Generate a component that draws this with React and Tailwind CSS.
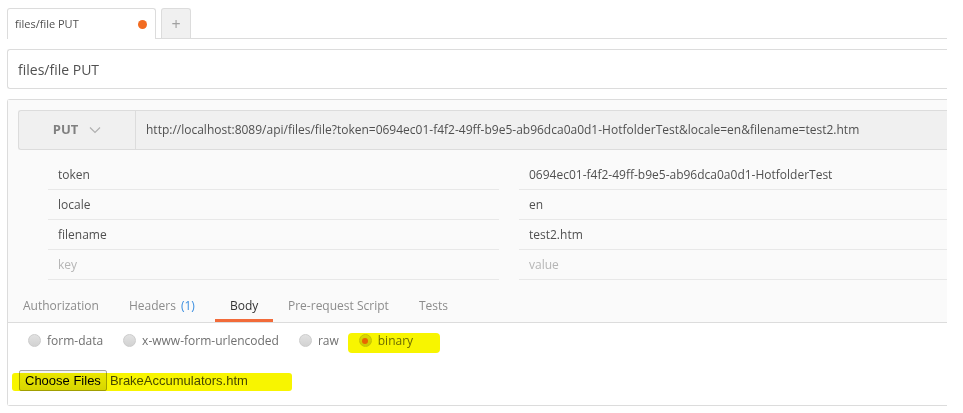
import React from 'react';

const params = [
  { key: 'token', value: '0694ec01-f4f2-49ff-b9e5-ab96dca0a0d1-HotfolderTest' },
  { key: 'locale', value: 'en' },
  { key: 'filename', value: 'test2.htm' },
  { key: 'key', value: 'value', placeholder: true },
];

const tabs = [
  { label: 'Authorization', w: 'w-[106px]' },
  { label: 'Headers', count: '(1)', w: 'w-[101px]' },
  { label: 'Body', w: 'w-[58px]', active: true },
  { label: 'Pre-request Script', w: 'w-[131px]' },
  { label: 'Tests', w: 'w-[70px]' },
];

const bodyTypes = ['form-data', 'x-www-form-urlencoded', 'raw', 'binary'];

const Radio = ({ checked }) => (
  <span className="w-[13px] h-[13px] rounded-full border border-[#cccccc] bg-gradient-to-b from-[#e2e2e2] to-[#d2d2d2] flex items-center justify-center shrink-0">
    {checked && <span className="w-[6px] h-[6px] rounded-full bg-[#f06a1f]" />}
  </span>
);

const App = () => {
  return (
    <div
      className="w-[963px] h-[413px] bg-white overflow-hidden relative"
      style={{ fontFamily: '"Open Sans", "Liberation Sans", sans-serif' }}
    >
      <div className="ml-[7px] w-[940px]">
        {/* Tabs bar */}
        <div className="pt-[8px] flex items-end border-b border-[#dcdcdc]">
          <div className="-mb-px w-[149px] h-[31px] bg-white border border-b-0 border-[#dcdcdc] rounded-t-[3px] flex items-center justify-between pl-[7px] pr-[8px]">
            <span className="text-[11px] text-[#505050]">files/file PUT</span>
            <span className="w-[9px] h-[9px] rounded-full bg-[#f26b21]" />
          </div>
          <div className="ml-[5px] w-[30px] h-[30px] bg-[#f0f0f0] border border-b-0 border-[#dcdcdc] rounded-t-[3px] flex items-center justify-center text-[#a0a0a0] text-[16px] leading-none">
            +
          </div>
        </div>

        {/* Request name */}
        <div className="mt-[10px] h-[40px] border border-r-0 border-[#dcdcdc] rounded-l-[3px] flex items-center pl-[10px]">
          <span className="text-[14px] text-[#505050]">files/file PUT</span>
        </div>

        {/* Request panel */}
        <div className="mt-[10px] border border-r-0 border-[#dcdcdc] rounded-l-[3px]">
          <div className="bg-[#fafafa] pt-[10px]">
            {/* URL bar */}
            <div className="ml-[10px] h-[40px] bg-[#f0f0f0] border border-r-0 border-[#dcdcdc] rounded-l-[3px] flex items-center">
              <div className="w-[117px] h-full border-r border-[#dcdcdc] flex items-center justify-center gap-[11px]">
                <span className="text-[13px] font-bold text-[#808080]">PUT</span>
                <svg width="12" height="8" viewBox="0 0 12 8" fill="none">
                  <polyline points="1,1.5 6,6.5 11,1.5" stroke="#b0b0b0" strokeWidth="1.2" />
                </svg>
              </div>
              <span className="pl-[10px] text-[12px] text-[#505050] whitespace-nowrap">
                http://localhost:8089/api/files/file?token=0694ec01-f4f2-49ff-b9e5-ab96dca0a0d1-HotfolderTest&amp;locale=en&amp;filename=test2.htm
              </span>
            </div>

            {/* Params */}
            <div className="mt-[10px] pl-[40px]">
              {params.map((p) => (
                <div key={p.key} className="flex h-[30px] gap-[20px]">
                  <div className="w-[451px] border-b border-[#e8e8e8] flex items-center pl-[10px]">
                    <span className={`text-[12px] ${p.placeholder ? 'text-[#b5b5b5]' : 'text-[#505050]'}`}>{p.key}</span>
                  </div>
                  <div className="flex-1 border-b border-[#e8e8e8] flex items-center pl-[10px]">
                    <span className={`text-[12px] ${p.placeholder ? 'text-[#b5b5b5]' : 'text-[#505050]'}`}>{p.value}</span>
                  </div>
                </div>
              ))}
            </div>

            {/* Section tabs */}
            <div className="flex h-[43px] border-b border-[#dcdcdc]">
              {tabs.map((t) => (
                <div
                  key={t.label}
                  className={`${t.w} flex flex-col justify-end ${t.active ? 'border-b-[3px] border-[#f26b3a]' : 'border-b-[3px] border-transparent'}`}
                >
                  <span
                    className={`pb-[4px] pl-[15px] text-[12px] whitespace-nowrap ${t.active ? 'text-[#333333]' : 'text-[#8c8c8c]'}`}
                  >
                    {t.label}
                    {t.count && <span className="ml-[5px] text-[#3a8ee0]">{t.count}</span>}
                  </span>
                </div>
              ))}
            </div>
          </div>

          {/* Body */}
          <div className="bg-white h-[82px] pl-[20px] pt-[9px]">
            <div className="flex items-center h-[17px] gap-[20px]">
              {bodyTypes.map((b) => (
                <label key={b} className="flex items-center gap-[6px]">
                  <Radio checked={b === 'binary'} />
                  <span className="text-[12px] text-[#707070] whitespace-nowrap">{b}</span>
                </label>
              ))}
            </div>
            <div
              className="mt-[21px] -ml-[9px] flex items-center"
              style={{ fontFamily: '"Liberation Sans", Arial, sans-serif' }}
            >
              <button className="h-[21px] px-[5px] border border-[#a6a6a6] rounded-[2px] bg-gradient-to-b from-[#f4f4f4] to-[#dedede] text-[13px] text-black leading-none">
                Choose Files
              </button>
              <span className="ml-[3px] text-[13px] text-[#4a4a4a]">BrakeAccumulators.htm</span>
            </div>
          </div>
        </div>
      </div>

      {/* Highlighter marks */}
      <div className="absolute left-[348px] top-[333px] w-[92px] h-[20px] rounded-[4px] bg-[#f8f500] mix-blend-multiply" />
      <div className="absolute left-[12px] top-[373px] w-[280px] h-[18px] rounded-[3px] bg-[#f8f500] mix-blend-multiply" />
    </div>
  );
};

export default App;
